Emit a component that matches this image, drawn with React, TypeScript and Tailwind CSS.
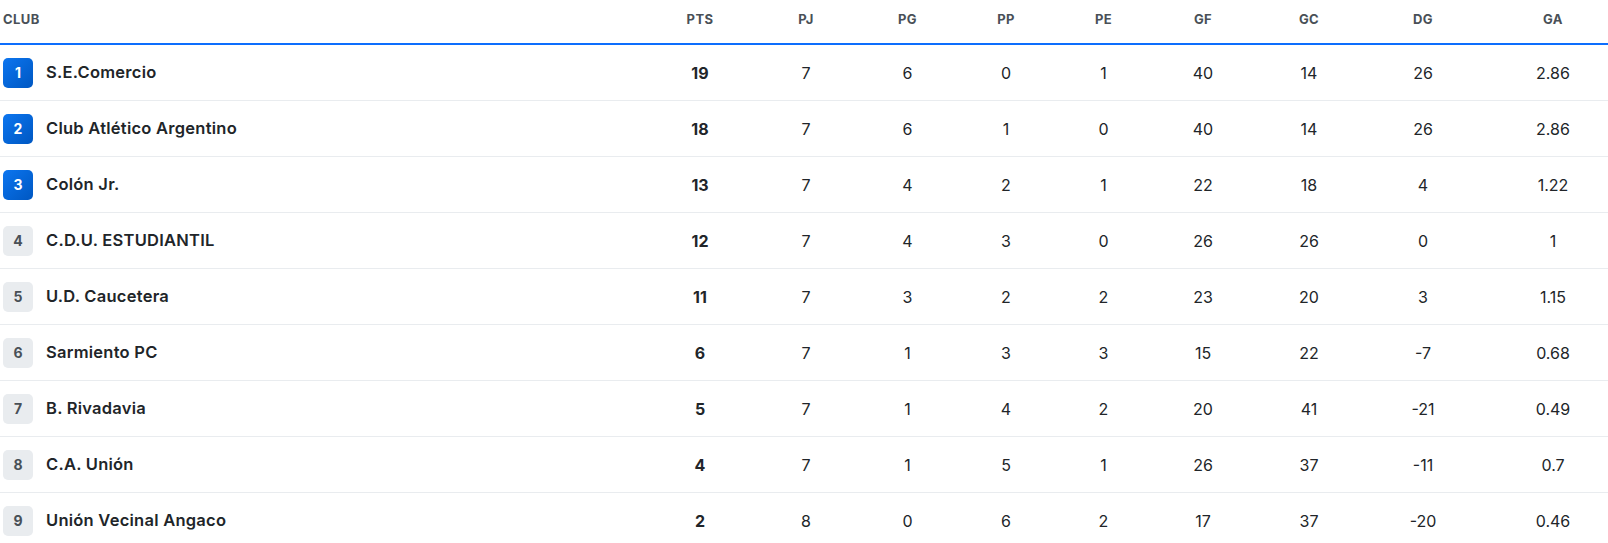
import React from 'react';

type Row = {
  pos: number;
  club: string;
  pts: number;
  pj: number;
  pg: number;
  pp: number;
  pe: number;
  gf: number;
  gc: number;
  dg: number;
  ga: string;
};

const rows: Row[] = [
  { pos: 1, club: 'S.E.Comercio', pts: 19, pj: 7, pg: 6, pp: 0, pe: 1, gf: 40, gc: 14, dg: 26, ga: '2.86' },
  { pos: 2, club: 'Club Atlético Argentino', pts: 18, pj: 7, pg: 6, pp: 1, pe: 0, gf: 40, gc: 14, dg: 26, ga: '2.86' },
  { pos: 3, club: 'Colón Jr.', pts: 13, pj: 7, pg: 4, pp: 2, pe: 1, gf: 22, gc: 18, dg: 4, ga: '1.22' },
  { pos: 4, club: 'C.D.U. ESTUDIANTIL', pts: 12, pj: 7, pg: 4, pp: 3, pe: 0, gf: 26, gc: 26, dg: 0, ga: '1' },
  { pos: 5, club: 'U.D. Caucetera', pts: 11, pj: 7, pg: 3, pp: 2, pe: 2, gf: 23, gc: 20, dg: 3, ga: '1.15' },
  { pos: 6, club: 'Sarmiento PC', pts: 6, pj: 7, pg: 1, pp: 3, pe: 3, gf: 15, gc: 22, dg: -7, ga: '0.68' },
  { pos: 7, club: 'B. Rivadavia', pts: 5, pj: 7, pg: 1, pp: 4, pe: 2, gf: 20, gc: 41, dg: -21, ga: '0.49' },
  { pos: 8, club: 'C.A. Unión', pts: 4, pj: 7, pg: 1, pp: 5, pe: 1, gf: 26, gc: 37, dg: -11, ga: '0.7' },
  { pos: 9, club: 'Unión Vecinal Angaco', pts: 2, pj: 8, pg: 0, pp: 6, pe: 2, gf: 17, gc: 37, dg: -20, ga: '0.46' },
];

const cols = 'grid grid-cols-[646px_108px_104px_99px_98px_97px_102px_110px_118px_126px]';
const heads = ['PTS', 'PJ', 'PG', 'PP', 'PE', 'GF', 'GC', 'DG', 'GA'];

export default function App() {
  return (
    <div className="w-[1608px] h-[543px] overflow-hidden bg-white font-['Inter',sans-serif] text-[#212529]">
      {/* cabecera */}
      <div className={`${cols} h-[45px] items-center border-b-2 border-[#0d6efd] text-[13px] font-bold text-[#495057] tracking-[0.4px] pb-[4px]`}>
        <div className="pl-[3px]">CLUB</div>
        {heads.map((h, i) => (
          <div key={h} className={i === heads.length - 1 ? 'text-center pl-[16px]' : 'text-center'}>
            {h}
          </div>
        ))}
      </div>

      {rows.map((r) => {
        const top = r.pos <= 3;
        return (
          <div key={r.pos} className={`${cols} h-[56px] items-center border-b border-[#e9ecef] text-[16px]`}>
            <div className="flex items-center gap-[13px] pl-[3px]">
              <span
                className={
                  top
                    ? 'w-[30px] h-[30px] rounded-[5px] flex items-center justify-center text-[14px] font-bold text-white bg-gradient-to-br from-[#0d76f0] to-[#0057c2]'
                    : 'w-[30px] h-[30px] rounded-[5px] flex items-center justify-center text-[14px] font-bold text-[#495057] bg-[#e9ecef]'
                }
              >
                {r.pos}
              </span>
              <span className="text-[16.5px] font-semibold tracking-[0.25px]">{r.club}</span>
            </div>
            <div className="text-center font-bold">{r.pts}</div>
            <div className="text-center">{r.pj}</div>
            <div className="text-center">{r.pg}</div>
            <div className="text-center">{r.pp}</div>
            <div className="text-center">{r.pe}</div>
            <div className="text-center">{r.gf}</div>
            <div className="text-center">{r.gc}</div>
            <div className="text-center">{r.dg}</div>
            <div className="text-center pl-[16px]">{r.ga}</div>
          </div>
        );
      })}
    </div>
  );
}
